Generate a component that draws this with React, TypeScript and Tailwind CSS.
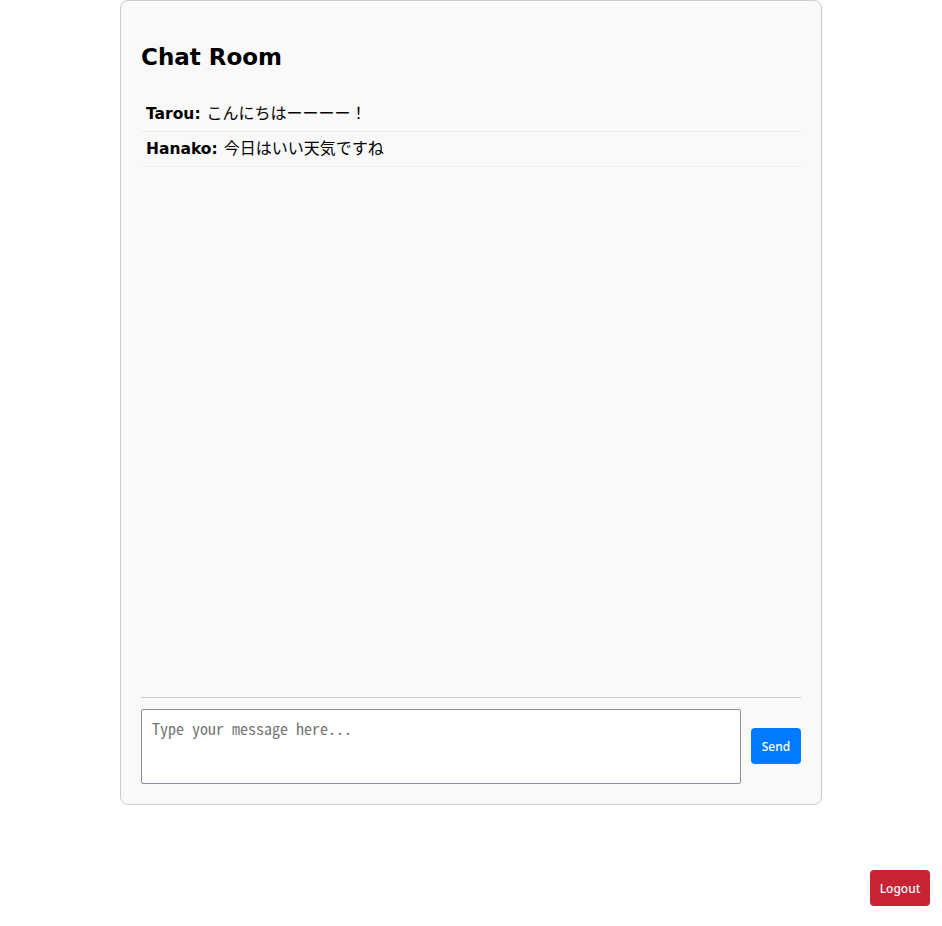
import React from "react";

const messages = [
  { user: "Tarou", text: "こんにちはーーーー！" },
  { user: "Hanako", text: "今日はいい天気ですね" },
];

export default function App() {
  return (
    <div className="relative min-h-[926px] bg-white font-['DejaVu_Sans','Noto_Sans_CJK_JP',sans-serif] text-black">
      <div className="mx-auto w-[702px] rounded-lg border border-[#ccc] bg-[#f9f9f9] p-5">
        <h2 className="mt-[22px] mb-[26px] text-[23px] font-bold leading-[28px]">Chat Room</h2>
        <div className="h-[600px] overflow-y-auto">
          {messages.map((m) => (
            <div
              key={m.user}
              className="h-[35px] border-b border-[#eee] px-[5px] pt-[3px] pb-[7px] text-[16px] leading-[24px] whitespace-nowrap"
            >
              <span className="text-[15.5px] font-bold">{m.user}:</span>
              <span className="ml-[6px] font-['Noto_Sans_CJK_JP',sans-serif]">{m.text}</span>
            </div>
          ))}
        </div>
        <div className="flex items-start gap-[10px] border-t border-[#ccc] pt-[11px]">
          <textarea
            placeholder="Type your message here..."
            className="h-[75px] w-[600px] resize-none rounded-[2px] border border-[#8f8f9d] bg-white px-[10px] pt-[7px] pb-[9px] font-['Noto_Sans_Mono_CJK_JP','Noto_Sans_CJK_JP',monospace] text-[16px] leading-[22px] placeholder:text-[#757575] outline-none"
          />
          <button className="mt-[19px] h-[36px] w-[50px] rounded-[4px] bg-[#007bff] pt-[1px] font-['Noto_Sans',sans-serif] text-[12px] font-medium text-white">
            Send
          </button>
        </div>
      </div>
      <button className="fixed right-[12px] bottom-[20px] h-[36px] w-[60px] rounded-[4px] bg-[#c82333] pt-[1px] font-['Noto_Sans',sans-serif] text-[12px] font-medium text-white">
        Logout
      </button>
    </div>
  );
}
